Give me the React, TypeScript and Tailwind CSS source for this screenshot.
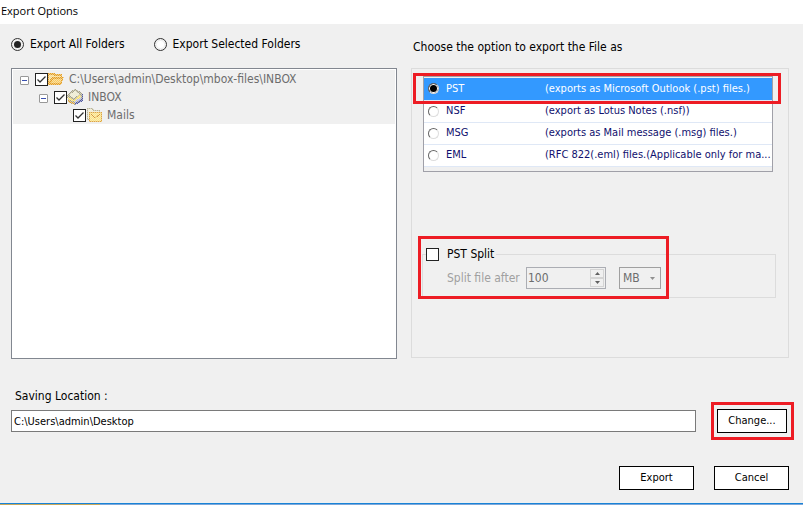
import React, { useState } from "react";

interface ExportFormat {
    id: string;
    description: string;
}

const FORMATS: ExportFormat[] = [
    { id: "PST", description: "(exports as Microsoft Outlook (.pst) files.)" },
    { id: "NSF", description: "(export as Lotus Notes (.nsf))" },
    { id: "MSG", description: "(exports as Mail message (.msg) files.)" },
    { id: "EML", description: "(RFC 822(.eml) files.(Applicable only for ma..." },
];

const Highlight: React.FC<{ className: string }> = ({ className }) => (
    <div className={`pointer-events-none absolute border-3 border-[#ed1c24] ${className}`} />
);

const CheckBox: React.FC<{ checked: boolean; onChange: (checked: boolean) => void }> = ({ checked, onChange }) => (
    <span className="relative flex size-[13px] shrink-0">
        <input
            type="checkbox"
            checked={checked}
            onChange={(e) => onChange(e.target.checked)}
            className="size-[13px] appearance-none border border-[#222] bg-white"
        />
        {checked && (
            <svg viewBox="0 0 13 13" className="pointer-events-none absolute inset-0 size-[13px]">
                <path d="M2.5 6.5 5 9l5.500-5.500" fill="none" stroke="#333" strokeWidth="1.300" />
            </svg>
        )}
    </span>
);

// The tree is disabled, so its icons are drawn through a checkerboard mask
const Dither = () => (
    <defs>
        <pattern id="dither" width="2" height="2" patternUnits="userSpaceOnUse">
            <rect width="2" height="2" fill="#777" />
            <rect width="1" height="1" fill="#fff" />
            <rect x="1" y="1" width="1" height="1" fill="#fff" />
        </pattern>
        <mask id="dither-mask" maskUnits="userSpaceOnUse" x="0" y="0" width="16" height="16">
            <rect width="16" height="16" fill="url(#dither)" />
        </mask>
    </defs>
);

const FolderIcon = () => (
    <svg viewBox="0 0 16 16" className="size-4 shrink-0" shapeRendering="crispEdges">
        <Dither />
        <g mask="url(#dither-mask)">
            <path d="M0 2h6l1 1h7v3h2l-3 8H0z" fill="#e8a020" />
            <path d="M1 4h4l1 1h7v1H4l-3 5z" fill="#fbdc8c" />
            <path d="M5 8h9l-2 4H3z" fill="#fccb5c" />
        </g>
    </svg>
);

const InboxIcon = () => (
    <svg viewBox="0 0 16 16" className="size-4 shrink-0" shapeRendering="crispEdges">
        <g mask="url(#dither-mask)">
            <path d="M0 7 3 3 8 0l6 3 2 3v6l-8 4-6-2z" fill="#a8a488" />
            <path d="M2 6 8 2l5 3-6 4z" fill="#f0eed0" />
            <path d="M1 8l6 3 6-5 1 2-6 5-7-3z" fill="#fce268" />
            <path d="M1 11l6 3 1 1-6-1z" fill="#e0a030" />
            <path d="M15 5h1v7l-8 4v-2l7-4z" fill="#5058a0" />
            <path d="M8 12l6-4v2l-6 4z" fill="#b8bee8" />
        </g>
    </svg>
);

const MailsIcon = () => (
    <svg viewBox="0 0 16 16" className="size-4 shrink-0" shapeRendering="crispEdges">
        <g mask="url(#dither-mask)">
            <path d="M1 1h6l1 2h6v3H4v7H1z" fill="#b8b496" />
            <path d="M2 2h4l1 2h6v2H3v6H2z" fill="#f4eed0" />
            <path d="M3 5h13v10H3z" fill="#e2a83a" />
            <path d="M4 6h11v8H4z" fill="#ffe680" />
            <path d="M5 7l4 4 5-4" fill="none" stroke="#dc9c30" />
        </g>
    </svg>
);

interface TreeRowProps {
    indent: string;
    label: string;
    icon: React.ReactNode;
    expandable?: boolean;
}

const TreeRow: React.FC<TreeRowProps> = ({ indent, label, icon, expandable = false }) => {
    const [checked, setChecked] = useState(true);
    return (
        <li className={`flex h-[18px] items-center ${indent}`}>
            {expandable ? (
                <button
                    aria-label={`Collapse ${label}`}
                    className="mt-0.5 mr-1.5 flex size-[9px] items-center justify-center rounded-[1px] border border-[#989898] bg-white"
                >
                    <span className="h-px w-[5px] bg-[#3a50b0]" />
                </button>
            ) : (
                <span className="mr-1.5 w-[9px]" />
            )}
            <label className="flex items-center">
                <CheckBox checked={checked} onChange={setChecked} />
                {icon}
                <span className="ml-[5px] whitespace-nowrap text-[#6d6d6d]">{label}</span>
            </label>
        </li>
    );
};

const Arrow: React.FC<{ up?: boolean; color?: string }> = ({ up = false, color = "#606060" }) => (
    <svg viewBox="0 0 5 3" className="h-[3px] w-[5px]">
        <path d={up ? "M0 3h5L2.500 0z" : "M0 0h5L2.500 3z"} fill={color} />
    </svg>
);

const App: React.FC = () => {
    const [scope, setScope] = useState("all");
    const [format, setFormat] = useState("PST");
    const [split, setSplit] = useState(false);
    const [size, setSize] = useState("100");
    const [location, setLocation] = useState("C:\\Users\\admin\\Desktop");

    return (
        <div className="flex min-h-screen flex-col bg-[#f0f0f0] font-['DejaVu_Sans_Condensed','Open_Sans',sans-serif] text-[12px] leading-4 text-black">
            <header className="flex h-6 items-center bg-white pb-0.5 pl-px">
                <h1 className="font-['Open_Sans',sans-serif] text-[11px]">Export Options</h1>
            </header>

            <main className="flex grow flex-col pr-3.5 pl-[11px]">
                <div className="grid grid-cols-[386fr_378fr] gap-x-3.5">
                    <section>
                        <div className="flex h-11 items-center gap-[29px] pb-1">
                            {[
                                { id: "all", label: "Export All Folders" },
                                { id: "selected", label: "Export Selected Folders" },
                            ].map((option) => (
                                <label key={option.id} className="flex items-center gap-1.5 whitespace-nowrap">
                                    <input
                                        type="radio"
                                        name="scope"
                                        checked={scope === option.id}
                                        onChange={() => setScope(option.id)}
                                        className="size-[13px] appearance-none rounded-full border border-[#333] bg-white bg-clip-content p-[2px] checked:bg-[#222]"
                                    />
                                    {option.label}
                                </label>
                            ))}
                        </div>
                        <div className="h-[291px] border border-[#828790] bg-white p-px">
                            <ul className="bg-[#f0f0f0]">
                                <TreeRow
                                    indent="pl-[7px]"
                                    label="C:\Users\admin\Desktop\mbox-files\INBOX"
                                    icon={<FolderIcon />}
                                    expandable
                                />
                                <TreeRow indent="pl-[26px]" label="INBOX" icon={<InboxIcon />} expandable />
                                <TreeRow indent="pl-[45px]" label="Mails" icon={<MailsIcon />} />
                            </ul>
                        </div>
                    </section>

                    <section>
                        <h2 className="flex h-11 items-center pt-0.5 pl-0.5">Choose the option to export the File as</h2>
                        <div className="h-[290px] border border-[#dcdcdc] pt-[7px] pr-[15px] pl-[11px]">
                            <div className="relative h-24 border border-[#a0a0a8] pt-px">
                                <table className="w-full table-fixed border-collapse text-[11px]">
                                    <tbody>
                                        {FORMATS.map((item) => (
                                            <tr
                                                key={item.id}
                                                className={`h-[22px] border-b border-[#dfe8f6] ${
                                                    format === item.id
                                                        ? "bg-[#3399ff] text-white"
                                                        : "bg-white text-[#10106e]"
                                                }`}
                                            >
                                                <td className="w-[121px] p-0 pl-1">
                                                    <label className="flex items-center gap-[7px]">
                                                        <input
                                                            type="radio"
                                                            name="format"
                                                            checked={format === item.id}
                                                            onChange={() => setFormat(item.id)}
                                                            className="size-[11px] appearance-none rounded-full border border-t-[#666] border-r-[#ddd] border-b-[#ddd] border-l-[#666] bg-white checked:bg-black checked:shadow-[inset_0_0_0_1px_white]"
                                                        />
                                                        {item.id}
                                                    </label>
                                                </td>
                                                <td className="p-0 whitespace-nowrap">{item.description}</td>
                                            </tr>
                                        ))}
                                    </tbody>
                                </table>
                                <Highlight className="-top-1 -right-[9px] -left-[11px] h-[31px]" />
                            </div>

                            <div className="relative mt-[73px] -mr-[3px] -ml-px">
                                <fieldset className="h-[53px] border border-[#dcdcdc] pl-[3px]">
                                    <legend className="pr-0.5">
                                        <label className="flex h-[18px] items-center gap-2">
                                            <CheckBox checked={split} onChange={setSplit} />
                                            PST Split
                                        </label>
                                    </legend>
                                    <div className="flex items-center pt-1 pl-[21px]">
                                        <label htmlFor="split-size" className="w-[79px] whitespace-nowrap text-[#a0a0a0]">
                                            Split file after
                                        </label>
                                        <div className="flex h-[22px] w-20 border border-[#abadb3] p-px">
                                            <input
                                                id="split-size"
                                                value={size}
                                                disabled={!split}
                                                onChange={(e) => setSize(e.target.value)}
                                                className="w-full min-w-0 text-[#6d6d6d]"
                                            />
                                            <div className="flex w-3.5 shrink-0 flex-col">
                                                <button
                                                    aria-label="Increase"
                                                    disabled={!split}
                                                    className="flex grow items-center justify-center border border-[#d4d4d4]"
                                                >
                                                    <Arrow up />
                                                </button>
                                                <button
                                                    aria-label="Decrease"
                                                    disabled={!split}
                                                    className="flex grow items-center justify-center border border-[#d4d4d4]"
                                                >
                                                    <Arrow />
                                                </button>
                                            </div>
                                        </div>
                                        <div className="relative ml-[13px] flex items-center">
                                            <select
                                                aria-label="Size unit"
                                                disabled={!split}
                                                className="h-[22px] w-[42px] appearance-none border border-[#a0a0a0] pl-[3px] text-[#6d6d6d]"
                                            >
                                                <option>MB</option>
                                                <option>GB</option>
                                            </select>
                                            <span className="pointer-events-none absolute right-1.5 flex">
                                                <Arrow color="#909090" />
                                            </span>
                                        </div>
                                    </div>
                                </fieldset>
                                <Highlight className="-top-[9px] -left-1 h-[63px] w-[251px]" />
                            </div>
                        </div>
                    </section>
                </div>

                <label htmlFor="location" className="mt-[29px] pl-1">
                    Saving Location :
                </label>
                <div className="mt-[5px] flex items-center justify-between gap-[21px]">
                    <input
                        id="location"
                        value={location}
                        onChange={(e) => setLocation(e.target.value)}
                        className="h-[22px] min-w-0 grow border border-[#7a7a7a] bg-white px-0.5 text-[11px]"
                    />
                    <div className="relative mr-0.5">
                        <button className="block h-6 w-[70px] border border-black bg-white text-[11px]">Change...</button>
                        <Highlight className="-inset-y-[7px] -right-[7px] -left-1.5" />
                    </div>
                </div>

                <div className="mt-[33px] flex justify-end gap-5 text-[11px]">
                    <button className="h-6 w-[75px] border border-black bg-white">Export</button>
                    <button className="h-6 w-[75px] border border-black bg-white">Cancel</button>
                </div>
            </main>

            <footer className="flex h-0.5 border-t border-[#1883d7]">
                <span className="w-[100px] bg-[#c8a85c]" />
                <span className="grow bg-[#7da7d9]" />
            </footer>
        </div>
    );
};

export default App;
